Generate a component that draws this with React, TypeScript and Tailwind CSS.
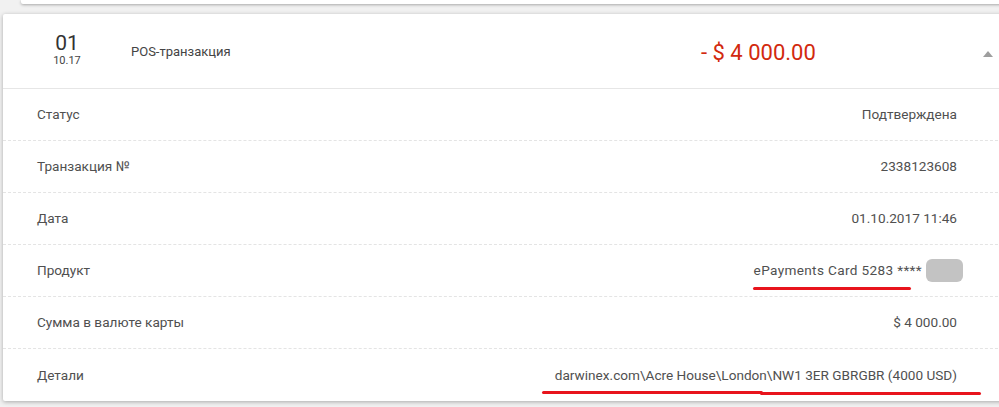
const rows = [
  { label: 'Статус', value: 'Подтверждена' },
  { label: 'Транзакция №', value: '2338123608' },
  { label: 'Дата', value: '01.10.2017 11:46' },
  { label: 'Продукт', value: 'ePayments Card 5283 ****', card: true },
  { label: 'Сумма в валюте карты', value: '$ 4 000.00' },
  { label: 'Детали', value: 'darwinex.com\\Acre House\\London\\NW1 3ER GBRGBR (4000 USD)', details: true },
];

export default function App() {
  return (
    <div className="h-[407px] w-[999px] overflow-hidden bg-[#f1f1f1] font-['Roboto',sans-serif] text-[#505050]">
      {/* previous transaction, mostly scrolled out */}
      <div className="ml-[21px] h-[4px] w-[1000px] rounded-b-[2px] bg-white shadow-[0_1px_3px_rgba(0,0,0,0.3)]" />

      <div className="ml-[3px] mt-[10px] w-[1020px] rounded-[2px] bg-white shadow-[0_1px_4px_rgba(0,0,0,0.3)]">
        {/* header */}
        <div className="flex h-[75px] items-center border-b border-[#e6e6e6]">
          <div className="flex w-[128px] flex-col items-center">
            <div className="flex w-[65px] flex-col items-center pb-[2px]">
              <span className="text-[21px] leading-[21px] text-[#333]">01</span>
              <span className="text-[11px] leading-[13px] text-[#444]">10.17</span>
            </div>
          </div>
          <div className="mt-[2px] w-[570px] text-[13px] text-[#444]">POS-транзакция</div>
          <div className="mt-[3px] text-[22px] leading-none text-[#d2290e]">- $ 4 000.00</div>
          <svg className="ml-[167px] mt-[6px]" width="10" height="6" viewBox="0 0 10 6">
            <path d="M0 6 L5 0 L10 6 Z" fill="#9e9e9e" />
          </svg>
        </div>

        {/* details */}
        {rows.map((r, i) => (
          <div
            key={r.label}
            className={
              i < rows.length - 1
                ? 'flex h-[52px] items-center justify-between border-b border-dashed border-[#e4e4e4] pl-[34px] pr-[66px] text-[13.6px]'
                : 'flex h-[52px] items-center justify-between pl-[34px] pr-[66px] text-[13.6px]'
            }
          >
            <span>{r.label}</span>
            {r.card ? (
              <div className="relative flex items-center">
                <span className="mr-[4px] tracking-[0.35px]">{r.value}</span>
                <span className="-mr-[6px] h-[23px] w-[37px] rounded-[6px] bg-[#c3c3c3]" />
                <span className="absolute left-[-1px] top-[28px] h-[3px] w-[158px] rounded-full bg-[#e8141c]" />
              </div>
            ) : r.details ? (
              <div className="relative">
                <span>{r.value}</span>
                <span className="absolute left-[-13px] top-[26px] h-[3px] w-[221px] rounded-full bg-[#e8141c]" />
                <span className="absolute left-[205px] top-[27px] h-[3px] w-[221px] rounded-full bg-[#e8141c]" />
              </div>
            ) : (
              <span>{r.value}</span>
            )}
          </div>
        ))}
      </div>
    </div>
  );
}
